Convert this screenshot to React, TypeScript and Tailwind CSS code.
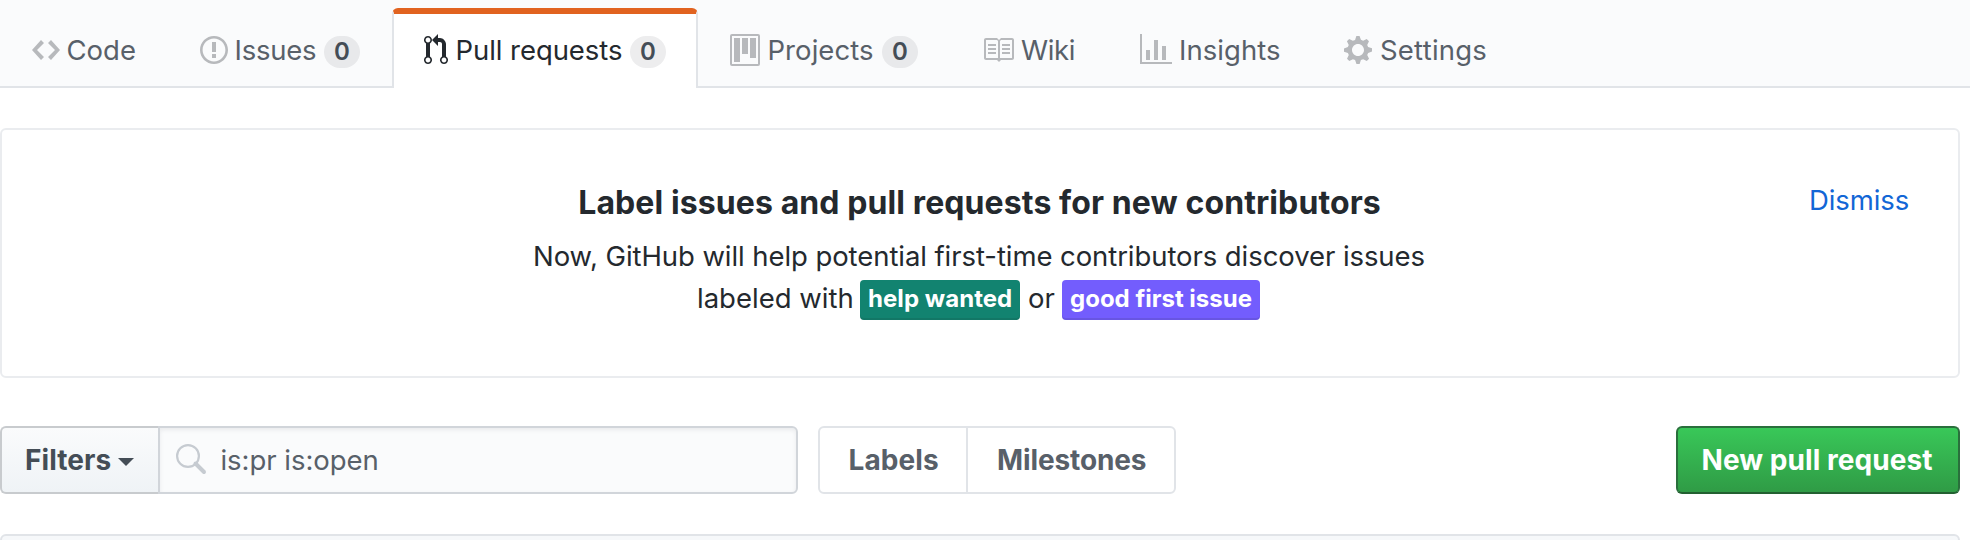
import type { ReactNode } from "react";

const paths = {
  code: "M9.5 3L8 4.5 11.5 8 8 11.5 9.5 13 14 8 9.5 3zm-5 0L0 8l4.5 5L6 11.5 2.5 8 6 4.5 4.5 3z",
  issue:
    "M7 2.3c3.14 0 5.7 2.56 5.7 5.7s-2.56 5.7-5.7 5.7A5.71 5.71 0 0 1 1.3 8c0-3.14 2.56-5.7 5.7-5.7zM7 1C3.14 1 0 4.14 0 8s3.14 7 7 7 7-3.14 7-7-3.14-7-7-7zm1 3H6v5h2V4zm0 6H6v2h2v-2z",
  pull: "M11 11.28V5c-.03-.78-.34-1.47-.94-2.06C9.46 2.35 8.78 2.03 8 2H7V0L4 3l3 3V4h1c.27.02.48.11.69.31.21.2.3.42.31.69v6.28A1.993 1.993 0 0 0 10 15a1.993 1.993 0 0 0 1-3.72zm-1 2.92c-.66 0-1.2-.55-1.2-1.2 0-.65.55-1.2 1.2-1.2.65 0 1.2.55 1.2 1.2 0 .65-.55 1.2-1.2 1.2zM4 3c0-1.11-.89-2-2-2a1.993 1.993 0 0 0-1 3.72v6.56A1.993 1.993 0 0 0 2 15a1.993 1.993 0 0 0 1-3.72V4.72c.59-.34 1-.98 1-1.72zm-.8 10c0 .66-.55 1.2-1.2 1.2-.65 0-1.2-.55-1.2-1.2 0-.65.55-1.2 1.2-1.2.65 0 1.2.55 1.2 1.2zM2 4.2C1.34 4.2.8 3.65.8 3c0-.65.55-1.2 1.2-1.2.65 0 1.2.55 1.2 1.2 0 .65-.55 1.2-1.2 1.2z",
  project:
    "M10 12h3V2h-3v10zm-4-2h3V2H6v8zm-4 4h3V2H2v12zm-1 1h13V1H1v14zM14 0H1a1 1 0 0 0-1 1v14a1 1 0 0 0 1 1h13a1 1 0 0 0 1-1V1a1 1 0 0 0-1-1z",
  book: "M3 5h4v1H3V5zm0 3h4V7H3v1zm0 2h4V9H3v1zm11-5h-4v1h4V5zm0 2h-4v1h4V7zm0 2h-4v1h4V9zm2-6v9c0 .55-.45 1-1 1H9.5l-1 1-1-1H2c-.55 0-1-.45-1-1V3c0-.55.45-1 1-1h5.5l1 1 1-1H15c.55 0 1 .45 1 1zm-8 .5L7.5 3H2v9h6V3.5zm7-.5H9.5l-.5.5V12h6V3z",
  graph: "M16 14v1H0V0h1v14h15zM5 13H3V8h2v5zm4 0H7V3h2v10zm4 0h-2V6h2v7z",
  gear: "M14 8.77v-1.6l-1.94-.64-.45-1.09.88-1.84-1.13-1.13-1.81.91-1.09-.45-.69-1.92h-1.6l-.63 1.94-1.11.45-1.84-.88-1.13 1.13.91 1.81-.45 1.09L0 7.23v1.59l1.94.64.45 1.09-.88 1.84 1.13 1.13 1.81-.91 1.09.45.69 1.92h1.59l.63-1.94 1.11-.45 1.84.88 1.13-1.13-.92-1.81.47-1.09L14 8.75v.02zM7 11c-1.66 0-3-1.34-3-3s1.34-3 3-3 3 1.34 3 3-1.34 3-3 3z",
};

function Icon({ name, units, active }: { name: keyof typeof paths; units: number; active?: boolean }) {
  return (
    <svg
      width={units * 2}
      height={32}
      viewBox={`0 0 ${units} 16`}
      fillRule="evenodd"
      className={active ? "shrink-0 fill-[#24292e]" : "shrink-0 fill-[#b7b9bc]"}
    >
      <path d={paths[name]} />
    </svg>
  );
}

function Tab({ className, active, children }: { className: string; active?: boolean; children: ReactNode }) {
  const look = active
    ? "rounded-t-[6px] border-x-[#e1e4e8] border-t-[#e16320] bg-white text-[#24292e]"
    : "border-transparent text-[#586069]";
  return (
    <a
      className={`flex h-20 shrink-0 items-center border-x-2 border-t-[6px] pb-0.5 pl-[30px] text-[27.5px] whitespace-nowrap ${look} ${className}`}
    >
      {children}
    </a>
  );
}

function Count() {
  return (
    <span className="mt-1 flex h-8 w-9 shrink-0 items-center justify-center rounded-full bg-[#1b1f23]/8 pb-px text-[24px] leading-none font-semibold text-[#444d56]">
      0
    </span>
  );
}

export default function App() {
  return (
    <div className="h-[540px] w-[1970px] overflow-hidden bg-white font-['Inter','Liberation_Sans',sans-serif] text-[27.5px] leading-[42px] text-[#24292e]">
      <nav className="flex h-[88px] border-b-2 border-[#e1e4e8] bg-[#fafbfc] pt-2">
        <Tab className="w-[168px]">
          <Icon name="code" units={14} />
          <span className="ml-[6.5px]">Code</span>
        </Tab>
        <Tab className="w-[224px]">
          <Icon name="issue" units={14} />
          <span className="ml-[6.5px] w-[89.5px] tracking-[-0.24px]">Issues</span>
          <Count />
        </Tab>
        <Tab className="w-[306px]" active>
          <Icon name="pull" units={12} active />
          <span className="ml-[7.5px] w-[174.5px] tracking-[-0.06px]">Pull requests</span>
          <Count />
        </Tab>
        <Tab className="w-[252px]">
          <Icon name="project" units={15} />
          <span className="ml-[7.5px] w-[114.5px] tracking-[0.06px]">Projects</span>
          <Count />
        </Tab>
        <Tab className="w-[158px]">
          <Icon name="book" units={16} />
          <span className="ml-[7px] tracking-[-0.4px]">Wiki</span>
        </Tab>
        <Tab className="w-[204px]">
          <Icon name="graph" units={16} />
          <span className="ml-[7px] tracking-[0.06px]">Insights</span>
        </Tab>
        <Tab className="w-[204px]">
          <Icon name="gear" units={14} />
          <span className="ml-2 tracking-[0.22px]">Settings</span>
        </Tab>
      </nav>

      <section className="mt-10 grid h-[250px] w-[1960px] grid-cols-[200px_1fr_200px] rounded-[6px] border-2 border-[#eaecef]">
        <div className="col-start-2 pt-[53px] text-center">
          <h3 className="pr-px text-[32px] leading-10 font-bold tracking-[0.1px]">
            Label issues and pull requests for new contributors
          </h3>
          <p className="mt-3 pr-0.5 tracking-[-0.075px]">
            Now, GitHub will help potential first-time contributors discover issues
          </p>
          <p className="flex h-[42px] items-center justify-center pr-[3px] text-left whitespace-nowrap">
            <span className="w-[163px]">labeled with</span>
            <span className="mt-1 flex h-10 w-40 items-center rounded-[4px] bg-[#128370] pb-0.5 pl-2 text-[24px] font-bold tracking-[0.05px] text-white shadow-[inset_0_-2px_0_rgba(27,31,35,0.12)]">
              help wanted
            </span>
            <span className="ml-2 w-[34px]">or</span>
            <span className="mt-1 flex h-10 w-[198px] items-center rounded-[4px] bg-[#735dfd] pb-0.5 pl-2 text-[24px] font-bold text-white shadow-[inset_0_-2px_0_rgba(27,31,35,0.12)]">
              good first issue
            </span>
          </p>
        </div>
        <a className="pt-[49px] pl-[51px] tracking-[-0.1px] text-[#1266d6]">Dismiss</a>
      </section>

      <div className="mt-12 flex h-[68px] w-[1960px] whitespace-nowrap">
        <button className="flex w-[158px] items-center rounded-l-[6px] border-2 border-r-0 border-[#c8cbce] bg-linear-to-b from-[#fafbfc] to-[#eff3f6] pl-[23px] text-[28px] font-bold tracking-[0.08px] text-[#444d56]">
          <span className="w-[93px] text-left">Filters</span>
          <svg width="16" height="8" viewBox="0 0 16 8" className="mt-1 fill-[#444d56]">
            <path d="M0 0h16L8 8z" />
          </svg>
        </button>
        <div className="flex w-[640px] items-center rounded-r-[6px] border-2 border-[#d1d5da] bg-[#fafbfc] pl-4 text-[#586069] shadow-[inset_0_2px_4px_rgba(27,31,35,0.075)]">
          <svg width="32" height="32" viewBox="0 0 32 32" className="-mt-0.5 fill-none stroke-[#c6cbd1]">
            <circle cx="12" cy="13" r="10.9" strokeWidth="2.2" />
            <path d="M19.5 20.5 28 29" strokeWidth="4" strokeLinecap="round" />
          </svg>
          <span className="ml-[12.5px] tracking-[-0.04px]">is:pr is:open</span>
        </div>
        <div className="ml-5 flex w-[358px] rounded-[6px] border-2 border-[#e1e4e8] text-[28px] font-bold text-[#586069]">
          <a className="flex w-[148px] items-center border-r-2 border-[#e1e4e8] pl-[28.5px] tracking-[0.1px]">Labels</a>
          <a className="flex items-center pl-[29px] tracking-[-0.12px]">Milestones</a>
        </div>
        <button className="ml-auto flex w-[284px] items-center rounded-[6px] border-2 border-[#2a6f3c] border-b-[#236031] bg-linear-to-b from-[#39c959] to-[#2f9a45] bg-origin-border pl-[23.5px] text-[28px] font-bold tracking-[0.06px] text-white">
          New pull request
        </button>
      </div>

      <div className="mt-10 h-20 w-[1960px] rounded-t-[6px] border-2 border-[#e1e4e8] bg-[#f6f8fa]" />
    </div>
  );
}
